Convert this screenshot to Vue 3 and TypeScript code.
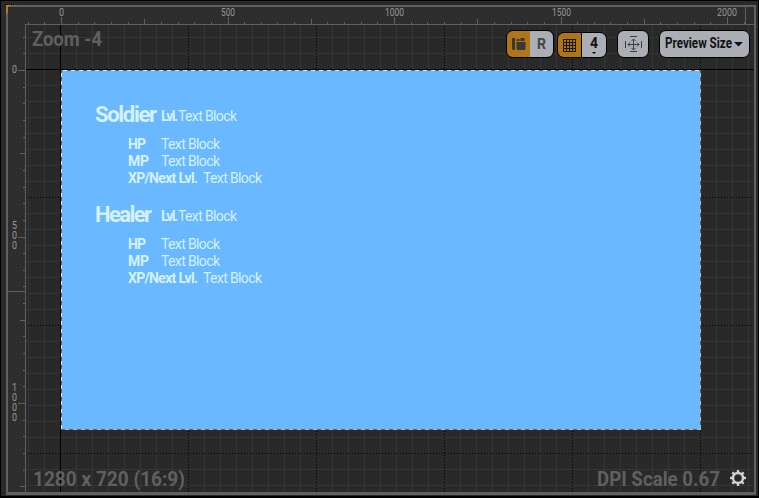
<script setup lang="ts">
interface Label { text: string; x: number; y: number; width: number }
interface Unit { name: string; nameWidth: number }

const range = (from: number, to: number, step: number): number[] => {
  const out: number[] = []
  for (let v = from; v <= to; v += step) out.push(v)
  return out
}
const minorX = range(28, 748, 16)
const minorY = range(37, 485, 16)
const majorX = range(188, 700, 128)
const majorY = range(197, 453, 128)

const tickStep = 16.65
const tickSize = (k: number): number => (k % 10 === 0 ? 8 : k % 5 === 0 ? 6 : 3)
const ticksX = range(-2, 41, 1).map(k => ({ at: Math.round(61 + k * tickStep), size: tickSize(k) }))
const ticksY = range(-2, 25, 1).map(k => ({ at: Math.round(70 + k * tickStep), size: tickSize(k) }))

const rulerX: Label[] = [
  { text: '0', x: 59, y: 16, width: 5 },
  { text: '500', x: 221, y: 16, width: 14 },
  { text: '1000', x: 385, y: 16, width: 19 },
  { text: '1500', x: 552, y: 16, width: 19 },
  { text: '2000', x: 717, y: 16, width: 20 },
]
const rulerY = [
  { text: '0', y: 73 },
  { text: '5', y: 229 }, { text: '0', y: 239 }, { text: '0', y: 249 },
  { text: '1', y: 391 }, { text: '0', y: 401 }, { text: '0', y: 411 }, { text: '0', y: 421 },
]
const units: Unit[] = [{ name: 'Soldier', nameWidth: 62 }, { name: 'Healer', nameWidth: 57 }]
const stats = [
  { name: 'HP', width: 18, gap: 15 },
  { name: 'MP', width: 21, gap: 12 },
  { name: 'XP/Next Lvl.', width: 70, gap: 5 },
]
</script>

<template>
  <main class="designer">
    <svg class="surface" width="759" height="498" viewBox="0 0 759 498" shape-rendering="crispEdges">
      <defs>
        <pattern id="grain" width="8" height="6" patternUnits="userSpaceOnUse">
          <rect width="8" height="6" fill="#2b2b2b" />
          <path d="M0 0h1v1h-1zM3 0h2v1h-2zM6 1h1v1h-1zM1 2h1v1h-1zM4 2h1v1h-1zM7 3h1v1h-1zM2 3h1v1h-1zM0 4h1v1h-1zM5 4h1v1h-1zM3 5h1v1h-1zM7 5h1v1h-1z" fill="#353535" />
        </pattern>
      </defs>
      <rect width="759" height="498" fill="#000" />
      <rect x="1" y="1" width="757" height="495" fill="#2a2a2a" />
      <rect x="6" y="5" width="750" height="490" fill="#606060" />
      <rect x="8" y="7" width="746" height="485" fill="url(#grain)" />
      <rect x="25" y="24" width="729" height="468" fill="#606060" />
      <rect x="26" y="25" width="728" height="467" fill="#292929" />
      <g fill="#363636">
        <rect v-for="x in minorX" :key="'v' + x" :x="x" y="25" width="1" height="467" />
        <rect v-for="y in minorY" :key="'h' + y" x="26" :y="y" width="728" height="1" />
      </g>
      <g stroke="#292929"><path v-for="x in majorX" :key="x" :d="`M${x + .5} 25V492`" /><path v-for="y in majorY" :key="y" :d="`M26 ${y + .5}H754`" /></g>
      <g stroke="#000" stroke-dasharray="1 2">
        <path v-for="x in majorX" :key="x" :d="`M${x + .5} 26V492`" />
        <path v-for="y in majorY" :key="y" :d="`M28 ${y + .5}H754`" />
      </g>
      <path d="M60.5 25V492M26 69.5H754" stroke="#000" />
      <g fill="#606060">
        <rect v-for="t in ticksX" :key="'x' + t.at" :x="t.at" :y="24 - (t.size - 1)" width="1" :height="t.size" />
        <rect v-for="t in ticksY" :key="'y' + t.at" :x="25 - (t.size - 1)" :y="t.at" :height="1" :width="t.size" />
        <rect x="745" y="7" width="1" height="17" /><rect x="8" y="291" width="17" height="1" />
      </g>
      <path d="M6 5h4v1h-3v8h-1z" fill="#c98a20" /><path d="M6 6h2v7h-2z" fill="#b87512" />
      <path d="M5 4.500h10" stroke="#000" stroke-dasharray="1 1" /><path d="M10 5.500h5" stroke="#b87512" stroke-dasharray="1 1" />
      <g class="ruler-text">
        <text v-for="l in rulerX" :key="l.text" :x="l.x" :y="l.y" :textLength="l.width" lengthAdjust="spacingAndGlyphs">{{ l.text }}</text>
        <text v-for="l in rulerY" :key="l.y" x="12" :y="l.y" textLength="5" lengthAdjust="spacingAndGlyphs">{{ l.text }}</text>
      </g>
      <rect x="61" y="70" width="640" height="360" fill="#6ab8ff" />
      <path d="M61 70.5H701M61.5 70V430M700.5 70V430M61 429.5H701" stroke="#5c6168" fill="none" />
      <path d="M63 70.5H701M61.5 73V430" stroke="#d8edf3" stroke-dasharray="4 4" fill="none" />
      <path d="M700.5 73V430M65 429.5H701" stroke="#b9bbbd" stroke-dasharray="4 4" fill="none" />
    </svg>

    <div class="overlay">
      <header class="topbar">
        <svg class="zoom-label" width="74" height="24"><text x="0" y="17" textLength="70" lengthAdjust="spacingAndGlyphs">Zoom -4</text></svg>
        <nav class="tools">
          <div class="tool pair first">
            <button class="on"><svg width="16" height="14"><path d="M1 1h3v12h-2l-1-1zM5.500 2h3v2h-3zM9.500 1h4v3h-4zM5.500 5h9v7l-1 1h-7l-1-1z" fill="#373737" /></svg></button>
            <button><svg width="10" height="14"><text class="letter muted" x="0" y="12" textLength="9" lengthAdjust="spacingAndGlyphs">R</text></svg></button>
          </div>
          <div class="tool pair second">
            <button class="on"><svg width="13" height="13" shape-rendering="crispEdges"><path d="M.5 0v13M3.5 0v13M6.5 0v13M9.5 0v13M12.5 0v13M0 .5h13M0 3.5h13M0 6.5h13M0 9.5h13M0 12.5h13" stroke="#171717" /></svg></button>
            <button class="snap"><svg width="10" height="19"><text class="letter" x="1" y="12" textLength="8" lengthAdjust="spacingAndGlyphs">4</text><path d="M3 16h4l-2 2z" /></svg></button>
          </div>
          <button class="tool fit">
            <svg width="17" height="17" fill="none" stroke="#3d3d3d"><path d="M5 .5h7M5 15.500h7M.5 5v7M16.500 5v7M8.500 3v11M3 8.500h11M6.500 5l2-2 2 2M6.500 12l2 2 2-2M5 6.500l-2 2 2 2M12 6.500l2 2-2 2" /></svg>
          </button>
          <button class="tool preview">
            <svg width="79" height="20"><text class="letter" x="0" y="14" textLength="67" lengthAdjust="spacingAndGlyphs">Preview Size</text><path d="M69 8h9l-4.500 4.500z" fill="#111" /></svg>
          </button>
        </nav>
      </header>

      <section class="party">
        <article v-for="unit in units" :key="unit.name" class="unit">
          <div class="heading">
            <svg class="name" width="66" height="28"><text x="0" y="21" :textLength="unit.nameWidth">{{ unit.name }}</text></svg>
            <svg width="17" height="28"><text class="bold" x="0" y="20" textLength="17">Lvl.</text></svg>
            <svg width="62" height="28"><text x="0" y="20" textLength="59">Text Block</text></svg>
          </div>
          <div class="stats">
            <div v-for="stat in stats" :key="stat.name" class="stat">
              <svg :width="stat.width + stat.gap" height="17"><text class="bold" x="0" y="14" :textLength="stat.width">{{ stat.name }}</text></svg>
              <svg width="62" height="17"><text x="0" y="14" textLength="59">Text Block</text></svg>
            </div>
          </div>
        </article>
      </section>

      <footer class="status">
        <svg width="156" height="24"><text x="0" y="17" textLength="152" lengthAdjust="spacingAndGlyphs">1280 x 720 (16:9)</text></svg>
        <div class="dpi">
          <svg width="126" height="24"><text x="0" y="17" textLength="123" lengthAdjust="spacingAndGlyphs">DPI Scale 0.67</text></svg>
          <svg class="gear" width="18" height="18" viewBox="-9 -9 18 18"><circle r="5" fill="none" stroke="#cfd3d8" stroke-width="2.400" /><path v-for="n in 8" :key="n" d="M-1.200-8h2.400v3h-2.400z" fill="#cfd3d8" :transform="`rotate(${n * 45})`" /></svg>
        </div>
      </footer>
    </div>
  </main>
</template>

<style>
body { margin: 0; overflow: hidden; }
</style>
<style scoped>
.designer { display: grid; width: 759px; height: 498px; font-family: Roboto, "Liberation Sans", sans-serif; }
.surface, .overlay { grid-area: 1 / 1; }
svg { display: block; flex: none; overflow: visible; }
.overlay { display: flex; flex-direction: column; z-index: 1; }
.ruler-text { font-size: 10px; fill: #989898; }
.topbar { display: flex; justify-content: space-between; height: 70px; box-sizing: border-box; padding: 29px 9px 0 32px; }
.zoom-label, .status { font-size: 20px; font-weight: 700; fill: #606060; }
.tools { display: flex; }
button { border: 0; padding: 0; margin: 0; background: #abaeb4; display: flex; align-items: center; justify-content: center; font-family: inherit; }
.tool { border: 1px solid #000; border-radius: 7px; box-sizing: border-box; overflow: hidden; height: 28px; margin-top: 1px; }
.pair { display: flex; }
.pair button { flex: 1; }
.pair .on { background: #b17517; flex: none; width: 23px; }
.first { width: 48px; margin-right: 3px; }
.second { width: 50px; margin-right: 10px; height: 26px; margin-top: 3px; }
.pair .snap { border-left: 1px solid #000; }
.fit { width: 32px; margin-right: 10px; }
.preview { width: 91px; }
.letter { font-size: 14px; font-weight: 700; fill: #111; }
.muted { fill: #444; }
.party { display: flex; flex-direction: column; padding: 31px 0 0 95px; height: 399px; box-sizing: border-box; fill: #d4f2ff; font-size: 14px; }
.unit { height: 100px; }
.heading { display: flex; height: 34px; }
.name { font-size: 22px; font-weight: 700; }
.bold { font-weight: 700; }
.stats { padding-left: 33px; }
.stat { display: flex; height: 17px; }
.status { display: flex; justify-content: space-between; padding: 0 12px 0 33px; }
.dpi { display: flex; gap: 6px; }
</style>
